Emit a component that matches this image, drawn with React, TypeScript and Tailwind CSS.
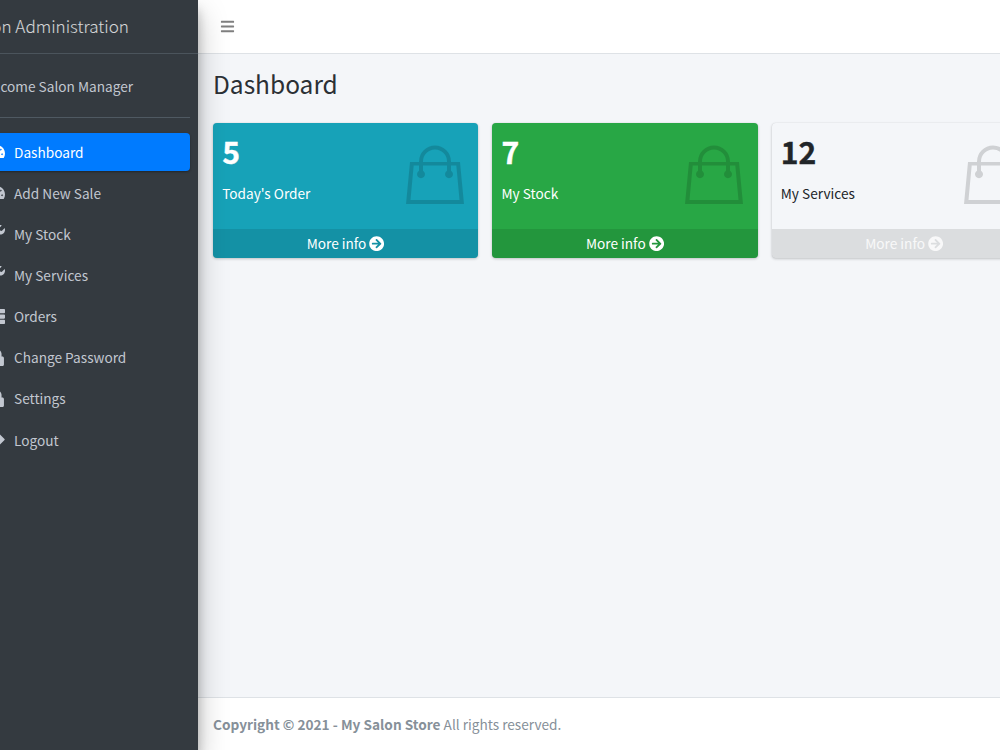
import {
  FaArrowCircleRight,
  FaBars,
  FaLock,
  FaSignOutAlt,
  FaTachometerAlt,
  FaThList,
  FaWrench,
} from 'react-icons/fa';
import type { IconType } from 'react-icons';

interface NavEntry {
  label: string;
  icon: IconType;
  active?: boolean;
}

interface BoxProps {
  value: number;
  label: string;
  tone: string;
  linkTone: string;
}

const navEntries: NavEntry[] = [
  { label: 'Dashboard', icon: FaTachometerAlt, active: true },
  { label: 'Add New Sale', icon: FaTachometerAlt },
  { label: 'My Stock', icon: FaWrench },
  { label: 'My Services', icon: FaWrench },
  { label: 'Orders', icon: FaThList },
  { label: 'Change Password', icon: FaLock },
  { label: 'Settings', icon: FaLock },
  { label: 'Logout', icon: FaSignOutAlt },
];

const boxes: BoxProps[] = [
  { value: 5, label: "Today's Order", tone: 'bg-[#17a2b8] text-white', linkTone: 'text-white' },
  { value: 7, label: 'My Stock', tone: 'bg-[#28a745] text-white', linkTone: 'text-white' },
  { value: 12, label: 'My Services', tone: 'text-[#212529]', linkTone: 'text-white/80' },
];

export default function App() {
  return (
    <div className="flex h-[750px] w-[1000px] overflow-hidden bg-[#f4f6f9] font-['Noto_Sans_CJK_SC','Noto_Sans',sans-serif] text-[13.65px] leading-[23px] text-[#212529]">
      <Sidebar />
      <div className="flex min-w-0 flex-1 flex-col">
        <header className="flex h-[54px] shrink-0 items-center border-b border-[#dee2e6] bg-white pl-[22px]">
          <FaBars className="size-[15px] text-[#7f7f7f]" />
        </header>
        <main className="flex-1 overflow-hidden pl-[15px]">
          <h1 className="mt-[13px] text-[24.5px] leading-[34px] text-[#2b3035]">Dashboard</h1>
          <div className="mt-[22px] flex gap-[14px]">
            {boxes.map((b) => (
              <SmallBox key={b.label} {...b} />
            ))}
          </div>
        </main>
        <footer className="h-[53px] shrink-0 border-t border-[#dee2e6] bg-white pt-[15px] pl-[15px] text-[#869099]">
          <strong>Copyright © 2021 - My Salon Store</strong> All rights reserved.
        </footer>
      </div>
    </div>
  );
}

function Sidebar() {
  return (
    <aside className="z-10 h-full w-[198px] shrink-0 bg-[#343a40] text-[#c2c7d0] shadow-[0_14px_28px_rgba(0,0,0,0.25),0_10px_10px_rgba(0,0,0,0.22)]">
      <div className="flex h-full flex-col overflow-hidden">
        <div className="flex h-[54px] shrink-0 items-center justify-end border-b border-[#4b545c] pr-[69px] pb-[2px] text-[17.1px] font-light whitespace-nowrap text-white/80">
          Salon Administration
        </div>
        <div className="mr-2 flex h-[64px] shrink-0 items-center justify-end border-b border-[#4f5962] pt-[1px] pr-[57px] whitespace-nowrap">
          Welcome Salon Manager
        </div>
        <nav className="mt-[15px] mr-2 -ml-[33px] flex flex-col gap-[3px]">
          {navEntries.map((entry) => (
            <NavLink key={entry.label} {...entry} />
          ))}
        </nav>
      </div>
    </aside>
  );
}

function NavLink({ label, icon: Icon, active }: NavEntry) {
  return (
    <a
      className={`flex h-[38.15px] items-center rounded pl-[15px] ${
        active ? 'bg-[#007bff] text-white shadow-[0_1px_3px_rgba(0,0,0,0.12),0_1px_2px_rgba(0,0,0,0.24)]' : ''
      }`}
    >
      <span className="mr-[3px] flex w-[29px] justify-center pb-[1px]">
        <Icon className="h-[17px] w-auto shrink-0" />
      </span>
      {label}
    </a>
  );
}

function SmallBox({ value, label, tone, linkTone }: BoxProps) {
  return (
    <section
      className={`flex h-[135px] w-[265.3px] shrink-0 flex-col overflow-hidden rounded-[4px] shadow-[0_0_1px_rgba(0,0,0,0.125),0_1px_3px_rgba(0,0,0,0.2)] ${tone}`}
    >
      <div className="flex flex-1 justify-between pr-[14.5px] pl-[9.2px]">
        <div>
          <p className="mt-[10px] text-[30.1px] leading-[36px] font-bold [-webkit-text-stroke:0.4px_currentColor]">
            {value}
          </p>
          <p className="mt-[13px]">{label}</p>
        </div>
        <BagIcon />
      </div>
      <a className={`flex h-[29px] items-center justify-center gap-[3px] bg-black/10 ${linkTone}`}>
        More info <FaArrowCircleRight className="size-[15.3px]" />
      </a>
    </section>
  );
}

function BagIcon() {
  return (
    <svg viewBox="0 0 58 60" className="mt-[22px] h-[60px] w-[58px] text-black/15" aria-hidden="true">
      <path
        fill="currentColor"
        fillRule="evenodd"
        d="M4 17H13V16.500A16 16 0 0 1 45 16.500V17H54L58 59H0ZM17 17H41V16.500A12 12 0 0 0 17 16.500ZM7.700 20.500L4.500 55H53.500L50.300 20.500H45V25.700A4 4 0 1 1 41 25.700V20.500H17V25.700A4 4 0 1 1 13 25.700V20.500Z"
      />
    </svg>
  );
}
